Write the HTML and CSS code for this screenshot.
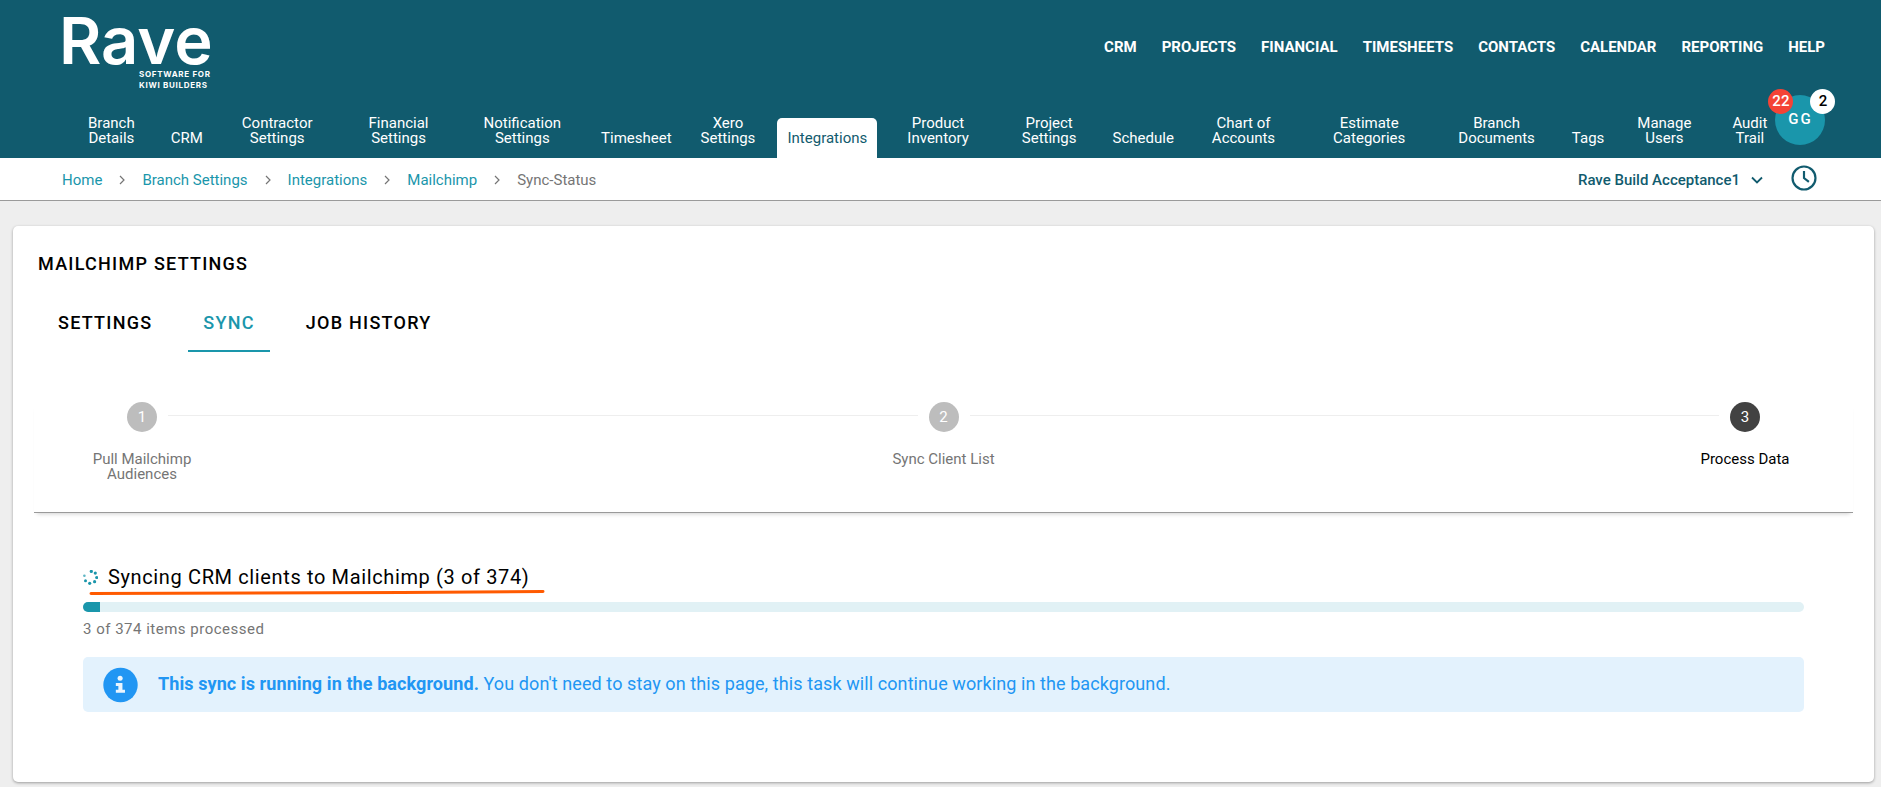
FILE: index.html
```html
<!DOCTYPE html>
<html lang="en">
<head>
<meta charset="utf-8">
<title>Mailchimp Settings</title>
<link rel="stylesheet" href="styles.css">
</head>
<body>
<header class="header">
  <div class="top-row">
    <a class="logo">
      <span class="logo-word">Rave</span>
      <span class="logo-tag">SOFTWARE FOR<br>KIWI BUILDERS</span>
    </a>
    <nav class="main-nav">
      <a>CRM</a><a>PROJECTS</a><a>FINANCIAL</a><a>TIMESHEETS</a><a>CONTACTS</a><a>CALENDAR</a><a>REPORTING</a><a>HELP</a>
    </nav>
  </div>
  <div class="sub-row">
    <a class="sub-item">Branch<br>Details</a>
    <a class="sub-item g36">CRM</a>
    <a class="sub-item g39">Contractor<br>Settings</a>
    <a class="sub-item g56">Financial<br>Settings</a>
    <a class="sub-item g55">Notification<br>Settings</a>
    <a class="sub-item g40">Timesheet</a>
    <a class="sub-item g29">Xero<br>Settings</a>
    <a class="sub-item sub-active">Integrations</a>
    <a class="sub-item g30">Product<br>Inventory</a>
    <a class="sub-item g53">Project<br>Settings</a>
    <a class="sub-item g36">Schedule</a>
    <a class="sub-item g38">Chart of<br>Accounts</a>
    <a class="sub-item g58">Estimate<br>Categories</a>
    <a class="sub-item g53">Branch<br>Documents</a>
    <a class="sub-item g37">Tags</a>
    <a class="sub-item g33">Manage<br>Users</a>
    <a class="sub-item g41">Audit<br>Trail</a>
    <div class="avatar">GG
      <span class="badge badge-red">22</span>
      <span class="badge badge-white">2</span>
    </div>
  </div>
</header>
<div class="crumb-bar">
  <div class="crumbs">
    <a>Home</a>
    <svg class="crumb-sep" viewBox="0 0 6 10"><path d="M1 1l4 4-4 4"/></svg>
    <a>Branch Settings</a>
    <svg class="crumb-sep" viewBox="0 0 6 10"><path d="M1 1l4 4-4 4"/></svg>
    <a>Integrations</a>
    <svg class="crumb-sep" viewBox="0 0 6 10"><path d="M1 1l4 4-4 4"/></svg>
    <a>Mailchimp</a>
    <svg class="crumb-sep" viewBox="0 0 6 10"><path d="M1 1l4 4-4 4"/></svg>
    <span>Sync-Status</span>
  </div>
  <div class="branch-picker">
    <span class="branch-name">Rave Build Acceptance1</span>
    <svg class="branch-chevron" viewBox="0 0 12 8"><path d="M1 1.5l5 5 5-5"/></svg>
    <svg class="clock" viewBox="0 0 24 24"><circle cx="12" cy="12" r="10.6"/><path d="M12 5.5V12l4.5 3.6"/></svg>
  </div>
</div>
<main class="page">
  <section class="card">
    <h1 class="card-title">MAILCHIMP SETTINGS</h1>
    <div class="tabs">
      <a class="tab">SETTINGS</a>
      <a class="tab tab-active">SYNC</a>
      <a class="tab">JOB HISTORY</a>
    </div>
    <div class="stepper">
      <div class="step">
        <span class="step-dot">1</span>
        <span class="step-label">Pull Mailchimp<br>Audiences</span>
      </div>
      <div class="step-line"></div>
      <div class="step">
        <span class="step-dot">2</span>
        <span class="step-label">Sync Client List</span>
      </div>
      <div class="step-line"></div>
      <div class="step step-current">
        <span class="step-dot">3</span>
        <span class="step-label">Process Data</span>
      </div>
    </div>
    <div class="sync">
      <div class="sync-heading">
        <svg class="spinner" viewBox="0 0 15 15">
          <circle cx="8.3" cy="1.4" r="1.6"/>
          <circle cx="12.3" cy="3.1" r="1.6"/>
          <circle cx="13.7" cy="7.5" r="1.6"/>
          <circle cx="11.6" cy="11.7" r="1.6"/>
          <circle cx="6.7" cy="13.3" r="1.6"/>
          <circle cx="2.5" cy="10.8" r="1.5"/>
          <circle class="dot-fade" cx="1.4" cy="5.8" r="1.3"/>
        </svg>
        <span class="sync-title">Syncing CRM clients to Mailchimp (3 of 374)</span>
        <svg class="scribble" viewBox="0 0 456 10" preserveAspectRatio="none"><path d="M2 6.6C120 6.2 300 5.6 454 4.6"/></svg>
      </div>
      <div class="progress"><div class="progress-fill"></div></div>
      <p class="progress-note">3 of 374 items processed</p>
      <div class="notice">
        <svg class="notice-icon" viewBox="0 0 36 36">
          <circle class="notice-disc" cx="18" cy="18" r="17.7"/>
          <circle class="notice-i" cx="17.6" cy="11" r="2.6"/>
          <path class="notice-i" d="M13.2 16h6.8v7h2.6v3h-9.4v-3h2.6v-4h-2.6z"/>
        </svg>
        <p class="notice-text"><strong>This sync is running in the background.</strong> You don't need to stay on this page, this task will continue working in the background.</p>
      </div>
    </div>
  </section>
</main>
</body>
</html>
```
FILE: styles.css
```css
* { box-sizing: border-box; }
html, body { margin: 0; padding: 0; }
body {
  height: 787px;
  overflow: hidden;
  background: #eeeeee;
  font-family: Roboto, "Liberation Sans", sans-serif;
  font-size: 15px;
}
a { text-decoration: none; color: inherit; }

/* Header */
.header {
  height: 158px;
  background: #115b6e;
  color: #fff;
}
.top-row {
  height: 94px;
  padding: 0 56px 0 62px;
  display: flex;
  align-items: center;
  justify-content: space-between;
  position: relative;
}
.logo { display: block; position: relative; width: 150px; height: 94px; }
.logo-word {
  position: absolute;
  left: -3px;
  top: 13px;
  font-family: Inter, sans-serif;
  font-size: 65px;
  line-height: 56px;
  font-weight: 600;
  letter-spacing: 0;
}
.logo-tag {
  position: absolute;
  left: 77px;
  top: 69px;
  font-family: Inter, sans-serif;
  font-size: 8px;
  line-height: 11px;
  font-weight: 700;
  letter-spacing: .7px;
  white-space: nowrap;
}
.main-nav { display: flex; gap: 25px; font-weight: 700; font-size: 15px; line-height: 20px; }

.sub-row {
  height: 64px;
  padding-left: 88px;
  display: flex;
  align-items: flex-end;
  font-size: 15px;
  line-height: 15px;
  text-align: center;
}
.sub-item { padding-bottom: 12px; white-space: nowrap; }
.g29 { margin-left: 29px; }
.g30 { margin-left: 30px; }
.g33 { margin-left: 33px; }
.g36 { margin-left: 36px; }
.g37 { margin-left: 37px; }
.g38 { margin-left: 38px; }
.g39 { margin-left: 39px; }
.g40 { margin-left: 40px; }
.g41 { margin-left: 41px; }
.g53 { margin-left: 53px; }
.g55 { margin-left: 55px; }
.g56 { margin-left: 56px; }
.g58 { margin-left: 58px; }
.sub-active {
  margin-left: 22px;
  height: 40px;
  width: 100px;
  padding-top: 13px;
  background: #fff;
  color: #115b6e;
  border-radius: 5px 5px 0 0;
}
.avatar {
  position: relative;
  flex: none;
  width: 50px;
  height: 50px;
  margin: 0 0 13px 8px;
  border-radius: 50%;
  background: #1a96ab;
  text-align: center;
  font-size: 15px;
  font-weight: 500;
  line-height: 48px;
  letter-spacing: 2px;
}
.badge {
  position: absolute;
  top: -6px;
  width: 25px;
  height: 25px;
  border-radius: 50%;
  font-size: 15px;
  font-weight: 500;
  line-height: 25px;
  letter-spacing: 0;
  text-align: center;
}
.badge-red { left: -7px; background: #f44336; color: #fff; }
.badge-white { left: 35px; background: #fff; color: #000; }

/* Breadcrumb */
.crumb-bar {
  height: 43px;
  padding: 2px 64px 0 62px;
  background: #fff;
  border-bottom: 1px solid #9a9a9a;
  display: flex;
  align-items: center;
  justify-content: space-between;
}
.crumbs { display: flex; align-items: center; gap: 17px; font-size: 15px; color: #1a96ab; }
.crumbs span { color: #757575; }
.crumb-sep { width: 6px; height: 10px; fill: none; stroke: #757575; stroke-width: 1.2; }
.branch-picker { display: flex; align-items: center; color: #115b6e; }
.branch-name { font-weight: 500; font-size: 15px; }
.branch-chevron { width: 12px; height: 8px; margin-left: 11px; fill: none; stroke: #115b6e; stroke-width: 1.8; }
.clock { width: 26px; height: 26px; margin-left: 28px; fill: none; stroke: #115b6e; stroke-width: 2; position: relative; top: -2px; }

/* Card */
.page { padding: 25px 7px 5px 13px; }
.card {
  height: 556px;
  background: #fff;
  border-radius: 5px;
  box-shadow: 0 1px 3px rgba(0, 0, 0, .35);
  padding-top: 28px;
}
.card-title {
  margin: 0 0 0 25px;
  font-size: 18px;
  line-height: 19px;
  font-weight: 500;
  letter-spacing: 1.25px;
  color: #000;
}
.tabs { display: flex; gap: 20px; margin: 21px 0 0 29.5px; }
.tab {
  height: 58px;
  padding: 0 15.5px 0;
  display: flex;
  align-items: center;
  font-size: 18px;
  font-weight: 500;
  letter-spacing: 1.25px;
  color: #000;
  border-bottom: 2px solid transparent;
}
.tab-active { color: #1a96ab; border-bottom-color: #1a96ab; }

/* Stepper */
.stepper {
  height: 111px;
  margin: 50px 21px 0;
  padding: 0 82px;
  display: flex;
  border-bottom: 1px solid #9a9a9a;
  box-shadow: 0 4px 4px -3px rgba(0, 0, 0, .18);
}
.step { flex: none; width: 52px; display: flex; flex-direction: column; align-items: center; }
.step-dot {
  width: 30px;
  height: 30px;
  border-radius: 50%;
  background: #bdbdbd;
  color: #fff;
  text-align: center;
  line-height: 30px;
  font-size: 15px;
}
.step-label {
  flex: none;
  width: 140px;
  margin-top: 20px;
  text-align: center;
  line-height: 15px;
  font-size: 15px;
  color: #757575;
}
.step-current .step-dot { background: #424242; }
.step-current .step-label { color: #000; }
.step-line { flex: 1; height: 1px; margin-top: 13px; background: #eeeeee; }

/* Sync */
.sync { padding: 53px 70px 0; }
.sync-heading {
  position: relative;
  display: flex;
  align-items: center;
  gap: 10px;
  height: 24px;
  font-size: 20px;
  line-height: 24px;
  letter-spacing: .63px;
  color: #000;
}
.sync-title { padding-bottom: 2px; }
.spinner { width: 15px; height: 15px; fill: #1a96ab; position: relative; top: -1px; }
.dot-fade { opacity: .7; }
.scribble {
  position: absolute;
  left: 6px;
  top: 21px;
  width: 456px;
  height: 10px;
  fill: none;
  stroke: #ff5a00;
  stroke-width: 3;
  stroke-linecap: round;
}
.progress {
  height: 10px;
  margin-top: 12px;
  background: #e1f1f5;
  border-radius: 5px;
  overflow: hidden;
}
.progress-fill { width: 17px; height: 100%; background: #1a96ab; }
.progress-note {
  margin: 7px 0 0;
  font-size: 15px;
  line-height: 20px;
  letter-spacing: .5px;
  color: #757575;
}
.notice {
  height: 55px;
  margin-top: 18px;
  padding-left: 20px;
  display: flex;
  align-items: center;
  gap: 20px;
  background: #e3f2fd;
  border-radius: 5px;
  color: #2196f3;
}
.notice-icon { width: 35px; height: 36px; }
.notice-disc { fill: #2196f3; }
.notice-i { fill: #eaf5fe; }
.notice-text { margin: 0 0 2px; font-size: 18px; letter-spacing: .09px; }
.notice-text strong { font-weight: 700; }
```
